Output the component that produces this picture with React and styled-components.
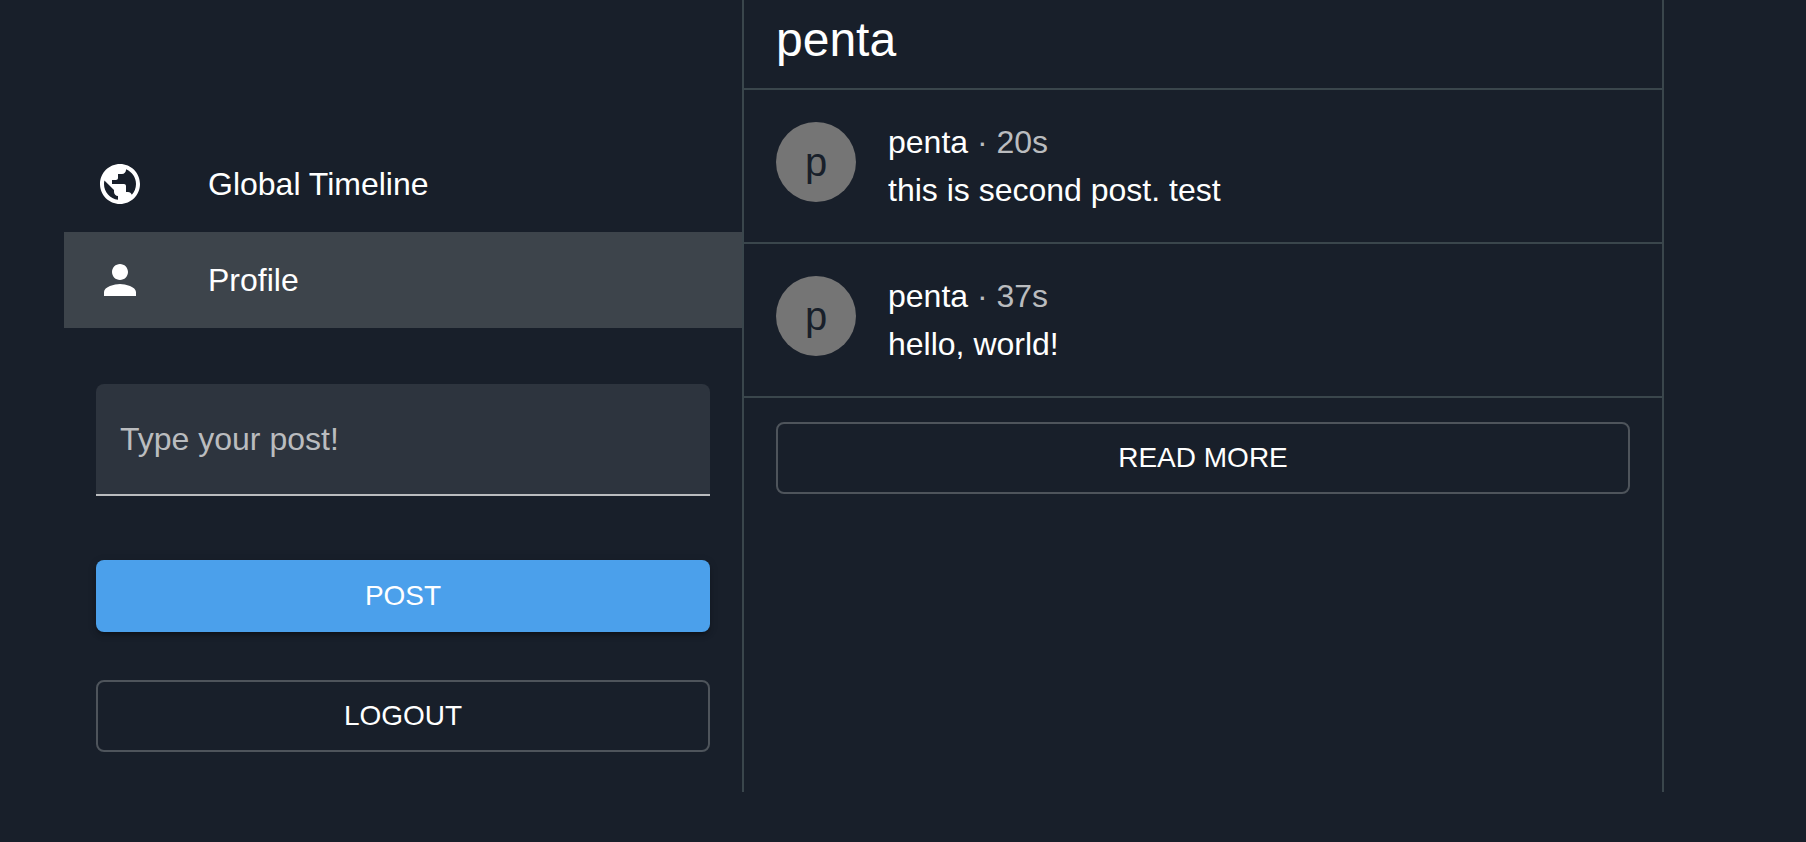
import React from 'react';
import styled, { createGlobalStyle } from 'styled-components';
import { MdPublic, MdPerson } from 'react-icons/md';

const posts = [
    { id: 2, user: 'penta', time: '20s', text: 'this is second post. test' },
    { id: 1, user: 'penta', time: '37s', text: 'hello, world!' },
];

const App = () => {
    const [content, setContent] = React.useState('');

    const onSubmit = (e) => {
        e.preventDefault();
        setContent('');
    };

    return (
        <>
            <GlobalStyle />
            <Container>
                <Sidebar>
                    <nav>
                        <NavItem href="#global">
                            <NavIcon><MdPublic /></NavIcon>
                            Global Timeline
                        </NavItem>
                        <NavItem href="#profile" $selected aria-current="page">
                            <NavIcon><MdPerson /></NavIcon>
                            Profile
                        </NavItem>
                    </nav>
                    <PostForm onSubmit={onSubmit}>
                        <PostInput
                            type="text"
                            aria-label="Type your post!"
                            placeholder="Type your post!"
                            value={content}
                            onChange={(e) => setContent(e.target.value)}
                        />
                        <PostButton type="submit">POST</PostButton>
                        <OutlinedButton type="button">LOGOUT</OutlinedButton>
                    </PostForm>
                </Sidebar>
                <Timeline>
                    <Header>
                        <Title>penta</Title>
                    </Header>
                    <PostList>
                        {posts.map((p) => (
                            <Post key={p.id}>
                                <Avatar aria-hidden="true">{p.user[0]}</Avatar>
                                <PostBody>
                                    <p>{p.user} <Time>· {p.time}</Time></p>
                                    <p>{p.text}</p>
                                </PostBody>
                            </Post>
                        ))}
                    </PostList>
                    <More>
                        <OutlinedButton type="button">READ MORE</OutlinedButton>
                    </More>
                </Timeline>
            </Container>
        </>
    );
}

const GlobalStyle = createGlobalStyle`
  *, *::before, *::after {
    box-sizing: border-box;
  }
  body {
    margin: 0;
    background-color: #181f2a;
    color: #fff;
    font-family: "Liberation Sans", Arial, sans-serif;
    font-size: 32px;
    line-height: 48px;
  }
  p, h1, ul {
    margin: 0;
    padding: 0;
  }
`;

const Container = styled.div`
  display: grid;
  grid-template-columns: minmax(0, 678fr) minmax(0, 922fr);
  padding: 0 142px 0 64px;
`;

const Sidebar = styled.aside`
  padding: 136px 0 40px;
`;

const NavItem = styled.a`
  display: flex;
  align-items: center;
  padding: 24px 32px;
  color: inherit;
  text-decoration: none;
  background-color: ${(props) => (props.$selected ? '#3d444b' : 'transparent')};
`;

const NavIcon = styled.span`
  display: flex;
  width: 112px;
  font-size: 48px;
`;

const PostForm = styled.form`
  display: flex;
  flex-direction: column;
  padding: 56px 32px 0;
`;

const PostInput = styled.input`
  width: 100%;
  height: 112px;
  margin-bottom: 64px;
  padding: 0 24px;
  border: 0;
  border-bottom: 2px solid #babcbf;
  border-radius: 8px 8px 0 0;
  outline: none;
  background-color: #2d343e;
  color: #fff;
  font: inherit;

  &::placeholder {
    color: #babcbf;
    opacity: 1;
  }
`;

const Button = styled.button`
  width: 100%;
  height: 72px;
  padding: 0 32px;
  border: 0;
  border-radius: 8px;
  color: #fff;
  font-family: inherit;
  font-size: 28px;
  line-height: 48px;
  cursor: pointer;
`;

const PostButton = styled(Button)`
  margin-bottom: 48px;
  background-color: #4ba0eb;
  box-shadow: 0 6px 2px -4px rgba(0, 0, 0, 0.2),
    0 4px 4px 0 rgba(0, 0, 0, 0.14),
    0 2px 10px 0 rgba(0, 0, 0, 0.12);
`;

const OutlinedButton = styled(Button)`
  border: 2px solid #4e545b;
  background-color: transparent;
`;

const Timeline = styled.main`
  border: solid #3a464c;
  border-width: 0 2px;
`;

const Header = styled.header`
  padding: 8px 32px 16px;
  border-bottom: 2px solid #3a464c;
`;

const Title = styled.h1`
  font-size: 48px;
  font-weight: 400;
  line-height: 64px;
`;

const PostList = styled.ul`
  list-style: none;
`;

const Post = styled.li`
  display: flex;
  align-items: flex-start;
  gap: 32px;
  padding: 28px 32px;
  border-bottom: 2px solid #3a464c;
`;

const Avatar = styled.div`
  display: flex;
  flex-shrink: 0;
  align-items: center;
  justify-content: center;
  width: 80px;
  height: 80px;
  margin-top: 4px;
  border-radius: 50%;
  background-color: #757575;
  color: #181f2a;
  font-size: 40px;
`;

const PostBody = styled.div`
  flex: 1;
  min-width: 0;
`;

const Time = styled.span`
  color: #babcbf;
`;

const More = styled.div`
  padding: 24px 32px;
`;

export default App;
